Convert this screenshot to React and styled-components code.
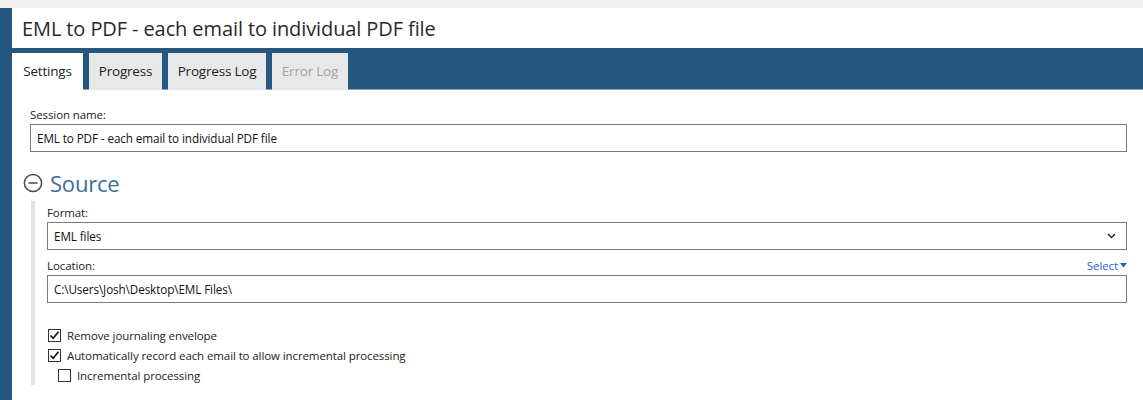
import React from "react";
import styled, { createGlobalStyle } from "styled-components";

const Global = createGlobalStyle`
  html, body { margin: 0; padding: 0; background: #ffffff; }
  body { font-family: "Open Sans", "Noto Sans", sans-serif; color: #222; }
  * { box-sizing: border-box; }
`;

const TopStrip = styled.div`
  height: 8px;
  background: #efefef;
`;

const Shell = styled.div`
  display: flex;
  min-height: 392px;
`;

const SideBar = styled.div`
  width: 12px;
  background: #24567e;
  flex: none;
`;

const Main = styled.div`
  flex: 1;
  display: flex;
  flex-direction: column;
`;

const TitleBar = styled.div`
  height: 40px;
  display: flex;
  align-items: center;
  padding-left: 10px;
  font-size: 20px;
  color: #2a2a2a;
  letter-spacing: -0.1px;
`;

const TabBar = styled.div`
  height: 42px;
  background: #24567e;
  display: flex;
  align-items: flex-end;
  gap: 6px;
  border-bottom: 1px solid #86a7c4;
`;

const Tab = styled.div`
  width: ${(p) => p.$w}px;
  height: 37px;
  margin-bottom: -1px;
  display: flex;
  align-items: center;
  justify-content: center;
  font-size: 13.5px;
  letter-spacing: -0.2px;
  background: ${(p) => (p.$active ? "#ffffff" : "#e8e8e8")};
  color: ${(p) => (p.$disabled ? "#a3a3a3" : "#222")};
  padding-bottom: 2px;
`;

const Content = styled.div`
  padding: 17px 16px 0 18px;
`;

const Label = styled.div`
  font-size: 11.5px;
  color: #222;
  line-height: 15px;
  height: 15px;
  margin-bottom: 2px;
  display: flex;
  justify-content: space-between;
  letter-spacing: -0.1px;
`;

const Field = styled.div`
  height: 28px;
  border: 1px solid #7a7a7a;
  display: flex;
  align-items: center;
  justify-content: space-between;
  padding: 0 10px 0 6px;
  font-size: 11.7px;
  color: #111;
  letter-spacing: -0.1px;
  margin-bottom: ${(p) => p.$mb || 0}px;
`;

const SectionHeader = styled.div`
  display: flex;
  align-items: center;
  gap: 7px;
  margin: 17px 0 4px -7px;
  height: 28px;
  font-size: 22px;
  color: #3b6d9c;
  letter-spacing: -0.2px;
`;

const Section = styled.div`
  border-left: 4px solid #e3e3e3;
  margin-left: 1px;
  padding: 4px 0 0 12px;
  min-height: 180px;
`;

const LinkSelect = styled.span`
  color: #1e5fd8;
  display: inline-flex;
  align-items: center;
  gap: 2px;
`;

const CheckRow = styled.label`
  display: flex;
  align-items: center;
  gap: 6px;
  height: 20px;
  font-size: 11.5px;
  color: #222;
  letter-spacing: -0.1px;
  padding-left: ${(p) => (p.$indent ? 11 : 1)}px;
`;

const Box = styled.span`
  width: 13px;
  height: 13px;
  border: 1px solid #333;
  background: #fff;
  display: inline-flex;
  align-items: center;
  justify-content: center;
  flex: none;
`;

const Checks = styled.div`
  margin-top: 22px;
`;

function Check({ checked, indent, children }) {
  return (
    <CheckRow $indent={indent}>
      <Box>
        {checked && (
          <svg width="11" height="11" viewBox="0 0 11 11">
            <path d="M1.5 5.5 L4.2 8.3 L9.5 1.8" fill="none" stroke="#111" strokeWidth="1.7" />
          </svg>
        )}
      </Box>
      {children}
    </CheckRow>
  );
}

export default function App() {
  return (
    <>
      <Global />
      <TopStrip />
      <Shell>
        <SideBar />
        <Main>
          <TitleBar>EML to PDF - each email to individual PDF file</TitleBar>
          <TabBar>
            <Tab $w={71} $active>Settings</Tab>
            <Tab $w={73}>Progress</Tab>
            <Tab $w={98}>Progress Log</Tab>
            <Tab $w={76} $disabled>Error Log</Tab>
          </TabBar>
          <Content>
            <Label>Session name:</Label>
            <Field>EML to PDF - each email to individual PDF file</Field>
            <SectionHeader>
              <svg width="20" height="20" viewBox="0 0 20 20">
                <circle cx="10" cy="10" r="8.6" fill="none" stroke="#4a4a4a" strokeWidth="1.5" />
                <path d="M5.5 10 H14.5" stroke="#4a4a4a" strokeWidth="1.5" />
              </svg>
              Source
            </SectionHeader>
            <Section>
              <Label>Format:</Label>
              <Field $mb={8}>
                EML files
                <svg width="9" height="6" viewBox="0 0 9 6">
                  <path d="M1 1 L4.5 4.5 L8 1" fill="none" stroke="#222" strokeWidth="1.3" />
                </svg>
              </Field>
              <Label>
                Location:
                <LinkSelect>
                  Select
                  <svg width="7" height="5" viewBox="0 0 7 5">
                    <path d="M0 0 H7 L3.5 4.5 Z" fill="#1e5fd8" />
                  </svg>
                </LinkSelect>
              </Label>
              <Field>C:\Users\Josh\Desktop\EML Files\</Field>
              <Checks>
                <Check checked>Remove journaling envelope</Check>
                <Check checked>Automatically record each email to allow incremental processing</Check>
                <Check indent>Incremental processing</Check>
              </Checks>
            </Section>
          </Content>
        </Main>
      </Shell>
    </>
  );
}
